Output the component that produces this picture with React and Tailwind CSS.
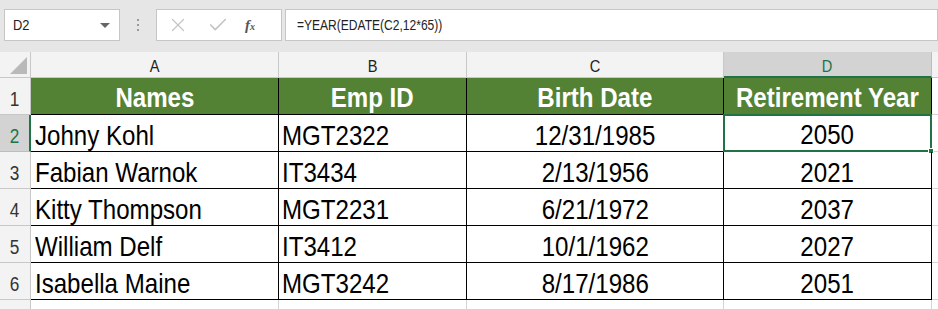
import React from 'react';
import { X, Check } from 'lucide-react';

const rows = [
  ['Johny Kohl', 'MGT2322', '12/31/1985', '2050'],
  ['Fabian Warnok', 'IT3434', '2/13/1956', '2021'],
  ['Kitty Thompson', 'MGT2231', '6/21/1972', '2037'],
  ['William Delf', 'IT3412', '10/1/1962', '2027'],
  ['Isabella Maine', 'MGT3242', '8/17/1986', '2051'],
];

// the screenshot is a little squeezed sideways, so text gets a narrow scale
const Txt = ({ children, origin = 'origin-center', className = '' }) => (
  <span className={`inline-block whitespace-nowrap scale-x-[0.86] ${origin} ${className}`}>{children}</span>
);

const gridCols = 'grid grid-cols-[31px_248px_188px_257px_208px_1fr]';

export default function App() {
  return (
    <div className="w-[938px] h-[309px] overflow-hidden bg-white font-['Liberation_Sans',Arial,sans-serif]">
      {/* formula bar */}
      <div className="h-[52px] bg-[#e6e6e6] flex items-start pt-[9px] pl-[4px]">
        <div className="w-[116px] h-[32px] bg-white border border-[#c6c6c6] flex items-center justify-between pl-[8px] pr-[9px]">
          <Txt origin="origin-left" className="text-[15px] text-[#222]">D2</Txt>
          <span className="w-0 h-0 border-l-[5px] border-r-[5px] border-t-[5px] border-l-transparent border-r-transparent border-t-[#666]" />
        </div>
        <div className="w-[36px] h-[32px] flex flex-col items-center justify-center gap-[3px]">
          <span className="w-[2px] h-[2px] bg-[#9a9a9a]" />
          <span className="w-[2px] h-[2px] bg-[#9a9a9a]" />
          <span className="w-[2px] h-[2px] bg-[#9a9a9a]" />
        </div>
        <div className="w-[126px] h-[32px] bg-white border border-[#c6c6c6] flex items-center pl-[10px]">
          <X className="w-[22px] h-[22px] text-[#c4c4c4]" strokeWidth={1.3} />
          <Check className="ml-[18px] w-[22px] h-[22px] text-[#c4c4c4]" strokeWidth={1.8} />
          <span className="ml-[16px] text-[15px] italic font-bold text-[#555] font-['Liberation_Serif',serif]">f<span className="text-[10px]">x</span></span>
        </div>
        <div className="ml-[3px] flex-1 h-[32px] bg-white border border-[#c6c6c6] flex items-center pl-[11px]">
          <Txt origin="origin-left" className="text-[14px] text-[#222]">=YEAR(EDATE(C2,12*65))</Txt>
        </div>
      </div>

      {/* column headers */}
      <div className={`${gridCols} h-[26px] bg-[#e6e6e6]`}>
        <div className="relative bg-[#f3f3f3] border-r border-b border-[#c8c8c8]">
          <span className="absolute right-[3px] bottom-[3px] w-0 h-0 border-b-[17px] border-l-[17px] border-b-[#b9b9b9] border-l-transparent" />
        </div>
        {['A', 'B', 'C'].map((c) => (
          <div key={c} className="bg-[#f3f3f3] border-r border-b border-[#c8c8c8] flex items-end justify-center pb-[2px]">
            <Txt className="text-[17px] leading-none text-[#222]">{c}</Txt>
          </div>
        ))}
        <div className="bg-[#d3d3d3] border-r border-b-2 border-r-[#bdbdbd] border-b-[#217346] flex items-end justify-center pb-[1px]">
          <Txt className="text-[17px] leading-none text-[#217346]">D</Txt>
        </div>
        <div className="bg-[#f3f3f3] border-b border-[#c8c8c8]" />
      </div>

      {/* header row */}
      <div className={`${gridCols} h-[37px]`}>
        <div className="bg-[#f3f3f3] border-r border-b border-[#c8c8c8] flex items-end justify-center pb-[5px]">
          <Txt className="text-[20px] leading-none text-[#333]">1</Txt>
        </div>
        {['Names', 'Emp ID', 'Birth Date', 'Retirement Year'].map((h) => (
          <div key={h} className="bg-[#548235] border-r border-b border-black flex items-end justify-center pb-[2px]">
            <Txt className="text-[28px] leading-none font-bold text-white">{h}</Txt>
          </div>
        ))}
        <div className="bg-white border-b border-[#d4d4d4]" />
      </div>

      {/* data rows */}
      {rows.map((r, i) => {
        const sel = i === 0;
        return (
          <div key={i} className={`${gridCols} h-[37px]`}>
            <div className={`flex items-end justify-center pb-[5px] border-b ${sel ? 'bg-[#d3d3d3] border-r-2 border-r-[#217346] border-b-[#bdbdbd]' : 'bg-[#f3f3f3] border-r border-[#c8c8c8]'}`}>
              <Txt className={`text-[20px] leading-none ${sel ? 'text-[#217346]' : 'text-[#333]'}`}>{i + 2}</Txt>
            </div>
            <div className="border-r border-b border-black flex items-end pl-[4px] pb-[1px]">
              <Txt origin="origin-left" className="text-[28px] leading-none text-black">{r[0]}</Txt>
            </div>
            <div className="border-r border-b border-black flex items-end pl-[3px] pb-[1px]">
              <Txt origin="origin-left" className="text-[28px] leading-none text-black">{r[1]}</Txt>
            </div>
            <div className="border-r border-b border-black flex items-end justify-center pb-[1px]">
              <Txt className="text-[28px] leading-none text-black">{r[2]}</Txt>
            </div>
            <div className={`relative flex items-end justify-center pb-[1px] ${sel ? 'border-2 border-[#217346] -ml-[1px] -mt-[1px]' : 'border-r border-b border-black'}`}>
              <Txt className="text-[28px] leading-none text-black">{r[3]}</Txt>
              {sel && <span className="absolute -right-[4px] -bottom-[4px] w-[6px] h-[6px] bg-[#217346] border border-white" />}
            </div>
            <div className="bg-white border-b border-[#d4d4d4]" />
          </div>
        );
      })}

      {/* next row, cut off */}
      <div className={`${gridCols} h-[9px]`}>
        <div className="bg-[#f3f3f3] border-r border-[#c8c8c8]" />
        <div className="border-r border-[#d4d4d4]" />
        <div className="border-r border-[#d4d4d4]" />
        <div className="border-r border-[#d4d4d4]" />
        <div className="border-r border-[#d4d4d4]" />
        <div />
      </div>
    </div>
  );
}
